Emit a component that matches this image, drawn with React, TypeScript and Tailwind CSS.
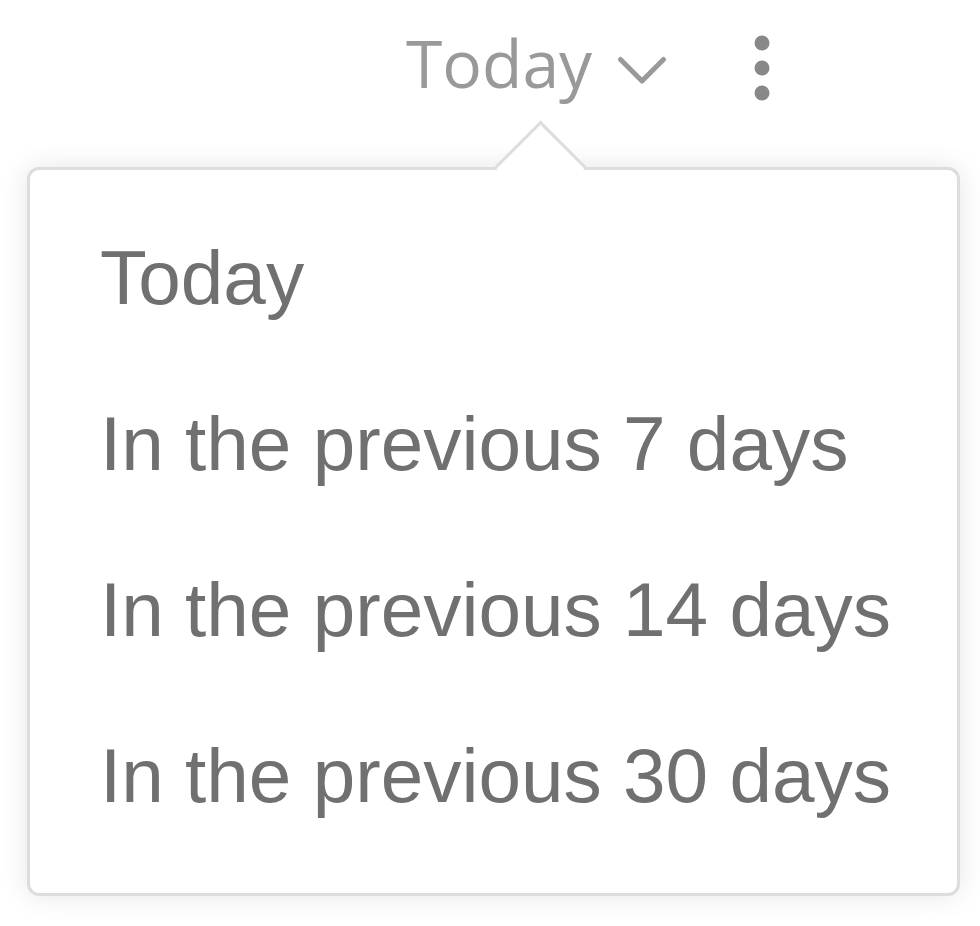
import React from 'react';

const options = [
  'Today',
  'In the previous 7 days',
  'In the previous 14 days',
  'In the previous 30 days',
];

export default function App() {
  return (
    <div className="w-[980px] h-[926px] bg-white overflow-hidden">
      {/* Header: range picker + overflow menu */}
      <div className="flex items-start pl-[406px] pt-[20px] h-[120px]">
        <div className="w-[209px] pt-[2px] font-['Open_Sans',sans-serif] text-[66px] leading-[80px] text-[#999999]">
          Today
        </div>
        <svg width="56" height="36" viewBox="0 0 56 36" className="mt-[34px]">
          <polyline points="5.5,5.5 27,27 48.5,5.5" fill="none" stroke="#999999" strokeWidth="5" strokeLinecap="round" strokeLinejoin="round" />
        </svg>
        <svg width="20" height="70" viewBox="0 0 20 70" className="ml-[81px] mt-[14px]">
          <circle cx="10" cy="9" r="7.5" fill="#888888" />
          <circle cx="10" cy="34" r="7.5" fill="#888888" />
          <circle cx="10" cy="59" r="7.5" fill="#888888" />
        </svg>
      </div>

      {/* Dropdown panel */}
      <div className="relative ml-[27px] mt-[47px] w-[933px] h-[729px] bg-white border-[3px] border-[#dddddd] rounded-[12px] shadow-[0_0_28px_rgba(0,0,0,0.1)]">
        <div className="absolute left-[478px] top-[-36px] w-[65px] h-[65px] bg-white border-t-[3px] border-l-[3px] border-[#dddddd] rotate-45" />
        <div className="relative flex flex-col pt-[69px] pl-[70px] gap-[89px] font-['Liberation_Sans',Arial,sans-serif] text-[76.5px] leading-[77px] text-[#707070]">
          {options.map((opt) => (
            <div key={opt}>{opt}</div>
          ))}
        </div>
      </div>
    </div>
  );
}
